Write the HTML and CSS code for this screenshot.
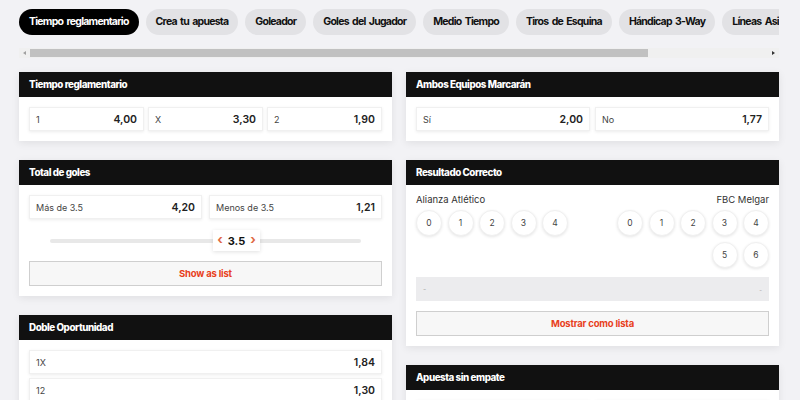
FILE: index.html
```html
<!DOCTYPE html>
<html lang="es">
<head>
<meta charset="utf-8">
<link rel="stylesheet" href="styles.css">
</head>
<body>
<div class="page">
  <nav class="tabs">
    <span class="tab active">Tiempo reglamentario</span>
    <span class="tab">Crea tu apuesta</span>
    <span class="tab">Goleador</span>
    <span class="tab">Goles del Jugador</span>
    <span class="tab">Medio Tiempo</span>
    <span class="tab">Tiros de Esquina</span>
    <span class="tab">Hándicap 3-Way</span>
    <span class="tab">Líneas Asiáticas</span>
  </nav>
  <div class="scrollbar">
    <span class="arrow left"></span>
    <span class="thumb"></span>
    <span class="rest"></span>
    <span class="arrow right"></span>
  </div>

  <div class="columns">
    <div class="col">
      <section class="card">
        <h2 class="card-head">Tiempo reglamentario</h2>
        <div class="card-body">
          <div class="grid3">
            <div class="odd"><span class="lbl">1</span><span class="val">4,00</span></div>
            <div class="odd"><span class="lbl">X</span><span class="val">3,30</span></div>
            <div class="odd"><span class="lbl">2</span><span class="val">1,90</span></div>
          </div>
        </div>
      </section>

      <section class="card">
        <h2 class="card-head">Total de goles</h2>
        <div class="card-body">
          <div class="grid2 wide">
            <div class="odd"><span class="lbl">Más de 3.5</span><span class="val">4,20</span></div>
            <div class="odd"><span class="lbl">Menos de 3.5</span><span class="val">1,21</span></div>
          </div>
          <div class="slider">
            <div class="track"></div>
            <div class="knob" style="left: 184px">
              <span class="chev">‹</span><span class="knob-val">3.5</span><span class="chev">›</span>
            </div>
          </div>
          <button class="list-btn">Show as list</button>
        </div>
      </section>

      <section class="card">
        <h2 class="card-head">Doble Oportunidad</h2>
        <div class="card-body rows">
          <div class="odd"><span class="lbl">1X</span><span class="val">1,84</span></div>
          <div class="odd"><span class="lbl">12</span><span class="val">1,30</span></div>
          <div class="odd"><span class="lbl">X2</span><span class="val">1,18</span></div>
        </div>
      </section>
    </div>

    <div class="col">
      <section class="card">
        <h2 class="card-head">Ambos Equipos Marcarán</h2>
        <div class="card-body">
          <div class="grid2">
            <div class="odd"><span class="lbl">Sí</span><span class="val">2,00</span></div>
            <div class="odd"><span class="lbl">No</span><span class="val">1,77</span></div>
          </div>
        </div>
      </section>

      <section class="card">
        <h2 class="card-head">Resultado Correcto</h2>
        <div class="card-body">
          <div class="teams">
            <span>Alianza Atlético</span>
            <span>FBC Melgar</span>
          </div>
          <div class="scores">
            <div class="circles">
              <span class="circle">0</span><span class="circle">1</span><span class="circle">2</span><span class="circle">3</span><span class="circle">4</span>
            </div>
            <div class="circles right">
              <span class="circle">0</span><span class="circle">1</span><span class="circle">2</span><span class="circle">3</span><span class="circle">4</span><span class="circle">5</span><span class="circle">6</span>
            </div>
          </div>
          <div class="select"><span>-</span><span class="small">-</span></div>
          <button class="list-btn">Mostrar como lista</button>
        </div>
      </section>

      <section class="card">
        <h2 class="card-head">Apuesta sin empate</h2>
        <div class="card-body">
          <div class="grid2">
            <div class="odd"><span class="lbl">Alianza Atlético</span><span class="val">2,80</span></div>
            <div class="odd"><span class="lbl">FBC Melgar</span><span class="val">1,35</span></div>
          </div>
        </div>
      </section>
    </div>
  </div>
</div>
</body>
</html>
```

FILE: styles.css
```css
* { box-sizing: border-box; }
html, body { margin: 0; padding: 0; }
body {
  background: #f2f2f5;
  font-family: Inter, "Noto Sans", sans-serif;
  color: #222;
  width: 800px;
  height: 400px;
  overflow: hidden;
}
.page {
  padding: 9px 21px 0 19px;
}
.tabs {
  display: flex;
  gap: 7px;
  overflow: hidden;
  height: 26px;
  white-space: nowrap;
}
.tab {
  flex: none;
  height: 26px;
  line-height: 26px;
  padding: 0 10px;
  border-radius: 13px;
  background: #e2e2e5;
  color: #111;
  font-size: 10.5px;
  font-weight: 700;
  letter-spacing: -0.75px;
  word-spacing: 1.5px;
}
.tab.active {
  background: #000;
  color: #fff;
}
.scrollbar {
  margin-top: 13px;
  height: 10px;
  display: flex;
  align-items: stretch;
  background: #f0f0f0;
}
.arrow {
  width: 11px;
  flex: none;
  position: relative;
}
.arrow::after {
  content: "";
  position: absolute;
  top: 3px;
  border-top: 2px solid transparent;
  border-bottom: 2px solid transparent;
}
.arrow.left::after { left: 4px; border-right: 3px solid #a0a0a0; }
.arrow.right::after { left: 4px; border-left: 3px solid #333; }
.thumb {
  width: 618px;
  flex: none;
  background: #c1c1c1;
  margin: 1px 0;
}
.rest { flex: 1; }

.columns {
  margin-top: 14px;
  display: flex;
  gap: 14px;
  align-items: flex-start;
}
.col {
  width: 373px;
  display: flex;
  flex-direction: column;
  gap: 19px;
}
.card {
  background: #fff;
  box-shadow: 0 2px 8px rgba(0, 0, 0, 0.08);
}
.card-head {
  margin: 0;
  height: 25px;
  line-height: 25px;
  padding: 0 10px;
  background: #111;
  color: #fff;
  font-size: 9.8px;
  font-weight: 800;
  letter-spacing: -0.45px;
}
.card-body {
  padding: 10px;
}
.grid3 {
  display: grid;
  grid-template-columns: repeat(3, 1fr);
  gap: 4px;
}
.grid2 {
  display: grid;
  grid-template-columns: 1fr 1fr;
  gap: 5px;
}
.grid2.wide { gap: 7px; }
.rows {
  display: flex;
  flex-direction: column;
  gap: 4px;
}
.odd {
  height: 24px;
  display: flex;
  align-items: center;
  justify-content: space-between;
  padding: 0 6px;
  background: #fff;
  border: 1px solid #f0f0f0;
  box-shadow: 0 1px 3px rgba(0, 0, 0, 0.08);
}
.lbl {
  font-size: 9px;
  color: #444;
}
.val {
  font-size: 10.5px;
  font-weight: 600;
  color: #222;
}
.slider {
  position: relative;
  height: 21px;
  margin: 11px 0 10px;
  display: flex;
  align-items: center;
}
.track {
  margin: 0 21px;
  height: 4px;
  border-radius: 2px;
  background: #e8e8e8;
  flex: 1;
}
.knob {
  position: absolute;
  top: 0;
  height: 21px;
  width: 47px;
  display: flex;
  align-items: center;
  justify-content: center;
  gap: 5px;
  background: #fff;
  box-shadow: 0 1px 4px rgba(0, 0, 0, 0.12);
}
.chev {
  color: #e06a45;
  font-size: 13px;
  font-weight: 700;
  line-height: 1;
  margin-top: -2px;
}
.knob-val {
  font-size: 11px;
  font-weight: 700;
  color: #111;
}
.list-btn {
  display: block;
  width: 100%;
  height: 25px;
  border: 1px solid #cfcfcf;
  background: #f7f7f7;
  color: #e8401c;
  font-family: inherit;
  font-size: 9.5px;
  font-weight: 700;
  letter-spacing: -0.2px;
  padding: 0;
}
.teams {
  display: flex;
  justify-content: space-between;
  font-size: 9.5px;
  color: #333;
  height: 10px;
  line-height: 10px;
  margin-bottom: 5px;
}
.scores {
  display: flex;
  justify-content: space-between;
  align-items: flex-start;
}
.circles {
  display: flex;
  flex-wrap: wrap;
  gap: 6px 5.5px;
}
.circles.right {
  width: 152px;
  justify-content: flex-end;
}
.circle {
  width: 26px;
  height: 26px;
  border-radius: 50%;
  display: flex;
  align-items: center;
  justify-content: center;
  font-size: 8.5px;
  color: #444;
  background: #fff;
  border: 1px solid #f0f0f0;
  box-shadow: 0 1px 3px rgba(0, 0, 0, 0.1);
}
.select {
  margin: 9px 0 10px;
  height: 24px;
  background: #ececee;
  display: flex;
  justify-content: space-between;
  align-items: center;
  padding: 0 7px;
  font-size: 7px;
  color: #aaa;
}
.select .small { font-size: 6px; }
```
